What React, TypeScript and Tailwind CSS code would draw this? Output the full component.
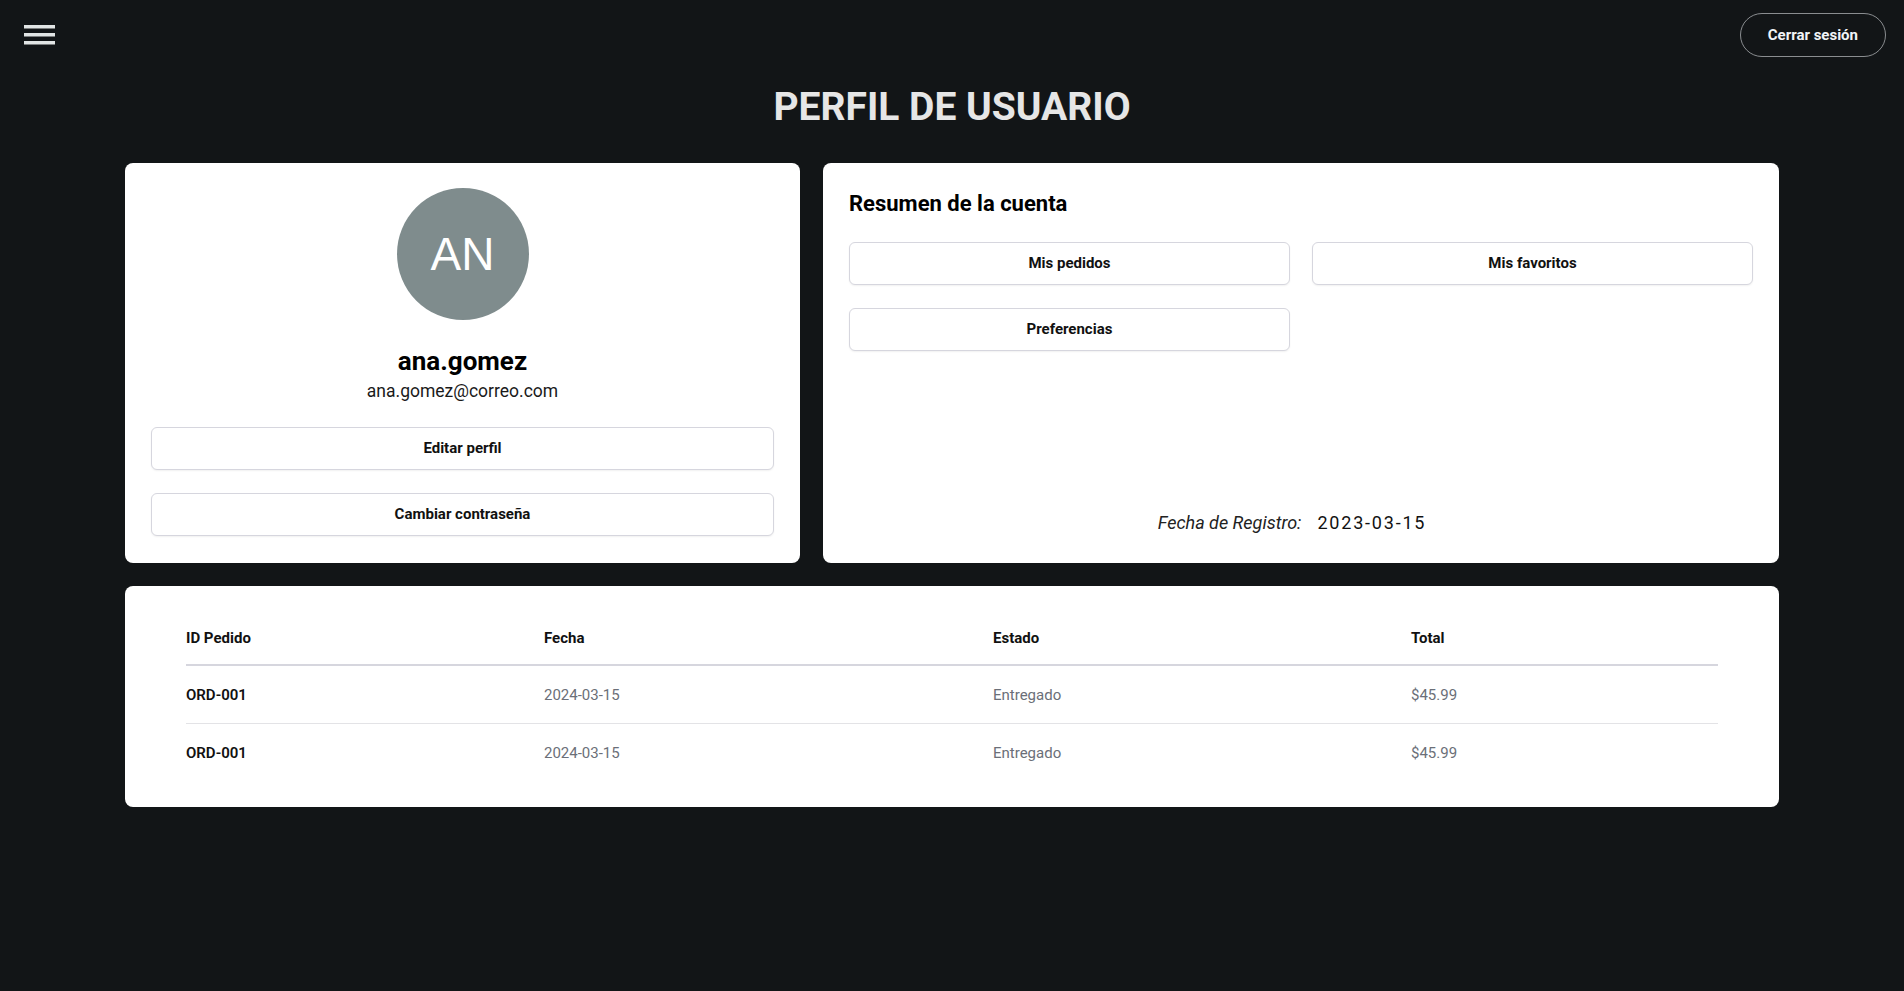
import React from "react";

const orders = [
  { id: "ORD-001", date: "2024-03-15", status: "Entregado", total: "$45.99" },
  { id: "ORD-001", date: "2024-03-15", status: "Entregado", total: "$45.99" },
];

function MenuIcon() {
  return (
    <svg width="31" height="20" viewBox="0 0 31 20" fill="#e1e5e5">
      <rect x="0" y="0" width="31" height="3.5" />
      <rect x="0" y="8" width="31" height="3.5" />
      <rect x="0" y="16" width="31" height="3.5" />
    </svg>
  );
}

function OutlineButton({ children }: { children: React.ReactNode }) {
  return (
    <button className="h-[43px] w-full rounded-md border border-[#d6d6de] bg-white text-[15px] font-bold text-[#111] shadow-[0_1px_2px_rgba(0,0,0,0.06)]">
      {children}
    </button>
  );
}

export default function App() {
  return (
    <div className="min-h-screen bg-[#121517] pb-10 font-['Roboto',sans-serif]">
      {/* Header */}
      <header className="flex h-[70px] items-center justify-between pl-6 pr-[18px]">
        <button className="flex h-[20px] w-[31px] items-center" aria-label="Menú">
          <MenuIcon />
        </button>
        <button className="h-[44px] rounded-full border border-[#8a8d90] px-[27px] text-[15px] font-bold text-[#f1f4f7]">
          Cerrar sesión
        </button>
      </header>

      <h1 className="mt-[13px] text-center text-[39px] font-bold leading-[48px] text-[#e6e6e6]">
        PERFIL DE USUARIO
      </h1>

      <main className="mx-auto mt-[32px] flex w-[1654px] flex-col gap-[23px]">
        <div className="grid grid-cols-[675px_1fr] gap-[23px]">
          {/* Profile card */}
          <section className="flex flex-col items-center rounded-lg bg-white px-[26px] pt-[25px] pb-[27px]">
            <div className="flex h-[132px] w-[132px] items-center justify-center rounded-full bg-[#7f8c8d]">
              <span className="font-['Liberation_Sans',Arial,sans-serif] text-[46px] leading-none text-white">
                AN
              </span>
            </div>
            <h2 className="mt-[25px] text-[26px] font-bold leading-[32px] text-black">ana.gomez</h2>
            <p className="mt-[3px] text-[17.5px] leading-[22px] text-[#1a1a1a]">ana.gomez@correo.com</p>
            <div className="mt-[25px] flex w-full flex-col gap-[23px]">
              <OutlineButton>Editar perfil</OutlineButton>
              <OutlineButton>Cambiar contraseña</OutlineButton>
            </div>
          </section>

          {/* Account summary */}
          <section className="flex flex-col rounded-lg bg-white px-[26px] pt-[26px] pb-[29px]">
            <h3 className="text-[22px] font-bold leading-[30px] text-black">Resumen de la cuenta</h3>
            <div className="mt-[23px] grid grid-cols-2 gap-x-[22px] gap-y-[23px]">
              <OutlineButton>Mis pedidos</OutlineButton>
              <OutlineButton>Mis favoritos</OutlineButton>
              <OutlineButton>Preferencias</OutlineButton>
            </div>
            <div className="mt-auto flex items-center justify-center gap-[16px] pr-[18px] text-[18px] leading-[22px]">
              <span className="italic text-[#222]">Fecha de Registro:</span>
              <span className="tracking-[1.8px] text-[#111]">2023-03-15</span>
            </div>
          </section>
        </div>

        {/* Orders table */}
        <section className="rounded-lg bg-white px-[61px] py-[26px]">
          <table className="w-full border-collapse text-left text-[15px] leading-[18px]">
            <thead>
              <tr className="border-b-2 border-[#d6d6de]">
                <th className="w-[358px] py-[17px] font-bold text-[#111]">ID Pedido</th>
                <th className="w-[449px] py-[17px] font-bold text-[#111]">Fecha</th>
                <th className="w-[418px] py-[17px] font-bold text-[#111]">Estado</th>
                <th className="py-[17px] font-bold text-[#111]">Total</th>
              </tr>
            </thead>
            <tbody>
              {orders.map((o, i) => (
                <tr key={i} className={i < orders.length - 1 ? "border-b border-[#e3e3e6]" : ""}>
                  <td className="py-[19.5px] font-semibold text-[#111]">{o.id}</td>
                  <td className="py-[19.5px] text-[#6b6f78]">{o.date}</td>
                  <td className="py-[19.5px] text-[#6b6f78]">{o.status}</td>
                  <td className="py-[19.5px] text-[#6b6f78]">{o.total}</td>
                </tr>
              ))}
            </tbody>
          </table>
        </section>
      </main>
    </div>
  );
}
